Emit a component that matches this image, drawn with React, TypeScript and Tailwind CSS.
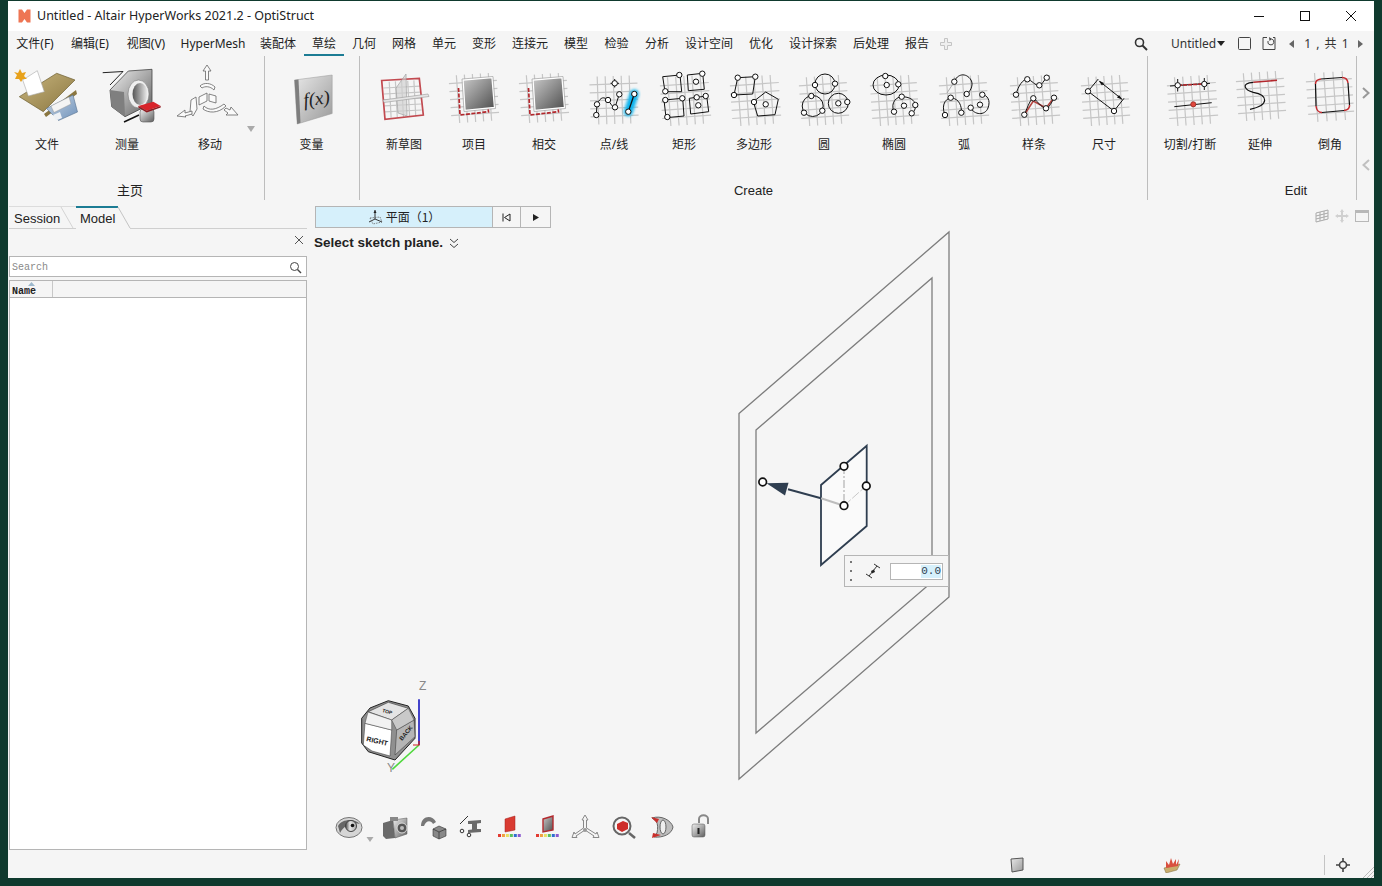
import React from "react";

const Grid = ({ x, y, w, h, a = -4, s = 8.4 }: { x: number; y: number; w: number; h: number; a?: number; s?: number }) => {
  const lines: React.ReactNode[] = [];
  const nx = Math.round(w / s);
  const ny = Math.round(h / s);
  for (let i = 1; i < nx; i++) {
    const lx = x + (i * w) / nx;
    lines.push(<line key={"v" + i} x1={lx} y1={y} x2={lx} y2={y + h} />);
  }
  for (let i = 1; i < ny; i++) {
    const ly = y + (i * h) / ny;
    lines.push(<line key={"h" + i} x1={x} y1={ly} x2={x + w} y2={ly} />);
  }
  return (
    <g stroke="#c6c6c6" strokeWidth="1.2" transform={`rotate(${a} ${x + w / 2} ${y + h / 2})`}>
      {lines}
    </g>
  );
};

const N = ({ x, y, r = 2.7 }: { x: number; y: number; r?: number }) => (
  <circle cx={x} cy={y} r={r} fill="#fff" stroke="#111" strokeWidth="1" />
);

const K = { fill: "none", stroke: "#111", strokeWidth: 1 } as const;

const IconBox = ({ left, children }: { left: number; children: React.ReactNode }) => (
  <svg width="70" height="64" viewBox={`${left} 66 70 64`} className="block overflow-visible">
    {children}
  </svg>
);

const ProjSquare = ({ dx }: { dx: number }) => (
  <g transform={`translate(${dx} 0)`}>
    <Grid x={520} y={74} w={48} h={48} />
    <path d="M528.5 88 L530 115 L558.5 111.7 L558 108" fill="none" stroke="#b3282d" strokeWidth="1.7" strokeDasharray="4 1.5" />
    <path d="M533 80 L562 77.5 L564.5 107.5 L535 110.5Z" fill="url(#sq)" stroke="#fff" strokeWidth="1.4" />
    <path d="M532 79 L563 76.5 L565.5 108.5 L534 111.5Z" fill="none" stroke="#aaa" strokeWidth="0.8" />
  </g>
);

const icons: Record<string, React.ReactNode> = {
  file: (
    <>
      <path d="M44 114 L76 90 L77 94 L46 117Z" fill="#8a7640" />
      <path d="M19.3 96.7 L56.7 73.3 L75 80 L43.3 111.7Z" fill="url(#tan)" stroke="#6f6034" strokeWidth="0.7" />
      <path d="M46.5 108.5 L73 95 L77.5 112 L58.5 120.5Z" fill="url(#fl)" stroke="#56718f" strokeWidth="0.6" />
      <path d="M51 106 L69 97 L71 104 L54 112.5Z" fill="#f4f4f4" stroke="#8b8b8b" strokeWidth="0.4" />
      <path d="M53 115 L60 112 L62 118 L56 120.5Z" fill="#eef1f5" />
      <path d="M22.7 80 L37.3 70.7 L44.3 91.7 L28.3 96Z" fill="#fff" stroke="#aaa" strokeWidth="0.6" />
      <path d="M20 69 L22 73 L26 72 L24 76 L27 79 L23 79 L21 82 L19 79 L15 79 L17 75 L14 72 L18 73Z" fill="#e8a21c" />
    </>
  ),
  measure: (
    <>
      <path d="M102.7 72.7 L123 71.5 L110 85" fill="none" stroke="#222" strokeWidth="1" />
      <path d="M110 90 L128.3 71 L152 69.3 L152 103.3 L125 116.7 L111.7 106.7Z" fill="url(#metal)" stroke="#444" strokeWidth="0.8" />
      <path d="M110 90 L124 92 L125 116.7 L111.7 106.7Z" fill="#7f7f7f" />
      <ellipse cx="138.5" cy="94" rx="10.5" ry="14" fill="#efefef" stroke="#777" strokeWidth="0.6" />
      <ellipse cx="140" cy="94" rx="7.5" ry="11" fill="url(#hole)" />
      <path d="M124 122 L139 115" stroke="#111" strokeWidth="1.5" />
      <rect x="140" y="109" width="14" height="13" rx="3" fill="url(#metal)" stroke="#555" strokeWidth="0.6" />
      <path d="M138.3 106 L153.3 101.7 L160.7 106 L146.7 110.7Z" fill="#d8232a" />
      <path d="M138.3 106 L146.7 110.7 L160.7 106 L160.7 107.5 L146.7 112.5 L138.3 107.5Z" fill="#8e1a1f" />
    </>
  ),
  move: (
    <g fill="#fafafa" stroke="#666" strokeWidth="0.8">
      <path d="M207 65 L211 71 L208.5 71 L208.5 80 L205.5 80 L205.5 71 L203 71Z" />
      <path d="M200 86 C204 82 211 83 215 87 L214 90 C210 86 205 86 202 88Z" />
      <path d="M199 97 L207 93 L207 101 L199 105Z" />
      <path d="M209 94 L216 96 L216 103 L209 101Z" />
      <path d="M191 100 L196 97 L197 109 L193 116 L190 112Z" />
      <path d="M177 116 L185 110 L185 113 L192 111 L192 114 L185 116 L186 117Z" />
      <path d="M204 106 C209 111 216 110 224 104 L226 106 C218 114 208 113 203 109Z" />
      <path d="M238 115 L226 115 L228 113 L224 110 L226 108 L230 110 L231 107Z" />
    </g>
  ),
  fx: (
    <>
      <path d="M294 80 L331.7 75 L331.7 113.5 L296.7 124Z" fill="url(#metal2)" stroke="#999" strokeWidth="0.5" />
      <path d="M294 80 L298 79.5 L300 122.8 L296.7 124Z" fill="#7e7e7e" />
      <text x="303" y="105" fontFamily="Liberation Serif, serif" fontStyle="italic" fontSize="19" fill="#222" transform="rotate(-8 315 100)">f(x)</text>
    </>
  ),
  newsk: (
    <>
      <Grid x={384} y={81} w={37} h={36} a={-3} s={6.2} />
      <path d="M381.7 80.5 L419.3 78.3 L423.3 115 L385 119.3Z" fill="none" stroke="#c24a50" strokeWidth="1.7" />
      <path d="M396 88 L406 74 L407 116 L398 113Z" fill="#cfcfcf" fillOpacity="0.65" stroke="#999" strokeWidth="0.6" />
      <path d="M383 100 L428 94 L429 96.5 L384 102.5Z" fill="#e5e5e5" stroke="#999" strokeWidth="0.6" />
    </>
  ),
  proj: <ProjSquare dx={-70} />,
  inter: <ProjSquare dx={0} />,
  pt: (
    <>
      <Grid x={590} y={76} w={48} h={48} a={-2} />
      <path d="M634.3 94 L628.3 111.7" stroke="#10b4ee" strokeWidth="9" strokeLinecap="round" filter="url(#glow)" />
      <path d="M596.3 115 L597 104.3 C601 96 604 97 608 100 C611 104 613 108 615 107.3 L619.3 94.3" {...K} />
      <path d="M634.3 94 L628.3 111.7" {...K} strokeWidth="1.3" />
      <path d="M614.7 79 V87.5 M610.5 83.3 H619" {...K} />
      <N x={596.3} y={115} /><N x={597} y={104.3} /><N x={608} y={100} /><N x={615} y={107.3} /><N x={619.3} y={94.3} /><N x={614.7} y={83.3} /><N x={634.3} y={94} /><N x={628.3} y={111.7} />
    </>
  ),
  rect: (
    <>
      <Grid x={661} y={76} w={49} h={49} />
      <path d="M662.7 76.7 L680 75 L681.7 91.7 L665 91.7Z M687.3 75 L702.7 73.3 L704.3 89.3 L688.3 90.7Z M664 100 L682.7 98.3 L684 116 L666 117.7Z M689.3 98.3 L706.7 96 L708.7 111.7 L690.7 114Z" {...K} />
      <N x={679.3} y={75} /><N x={665.3} y={91.3} /><N x={702.3} y={73.7} /><N x={696} y={81.7} /><N x={665.3} y={100} /><N x={682.3} y={98.3} /><N x={667.3} y={117} /><N x={696.7} y={97.3} /><N x={705.7} y={96} /><N x={698.3} y={105.3} />
    </>
  ),
  poly: (
    <>
      <Grid x={731} y={76} w={49} h={49} />
      <path d="M737.7 77.7 L755.3 76.7 L752.7 94 L734 95Z M765.7 92 L778.3 99.3 L775 114.7 L757.7 116 L753.3 101.7Z" {...K} />
      <N x={737.7} y={77.7} /><N x={755.3} y={76.7} /><N x={734} y={95} /><N x={754} y={102} /><N x={765.7} y={104.3} />
    </>
  ),
  circ: (
    <>
      <Grid x={800} y={76} w={48} h={49} />
      <circle cx="825" cy="84" r="10" {...K} /><circle cx="812.7" cy="106" r="10.5" {...K} /><circle cx="838.3" cy="103.3" r="10" {...K} />
      <N x={815} y={85} /><N x={835} y={83.7} /><N x={811.3} y={96} /><N x={804} y={112.7} /><N x={822.3} y={110.7} /><N x={838.3} y={103.3} /><N x={847.3} y={102} />
    </>
  ),
  ell: (
    <>
      <Grid x={871} y={76} w={47} h={49} />
      <ellipse cx="886" cy="85" rx="13" ry="10" {...K} />
      <path d="M894 111.7 C890 102 897 96.7 902 96.7 C909 96.7 915 100 915.3 105 C916 109 914 112 911.7 113.3" {...K} />
      <N x={885.3} y={76} /><N x={898.3} y={84.3} /><N x={886.7} y={85} /><N x={901.7} y={96.7} /><N x={894} y={111.7} /><N x={904} y={105.7} /><N x={911.7} y={113.3} /><N x={915.3} y={105} />
    </>
  ),
  arc: (
    <>
      <Grid x={940} y={76} w={48} h={49} />
      <path d="M947 93 L954.3 81.7" stroke="#aaa" strokeWidth="1" />
      <path d="M954.3 81.7 C957 74 966 72 971 80 C974 85 970 92 966.7 94" {...K} />
      <path d="M945 115 C940 103 948 97 952 98 C959 99 962 106 961.3 112.7" {...K} />
      <path d="M970.7 107.7 C974 115 985 116 988 108 C991 100 987 95 982.3 94.7" {...K} />
      <N x={954.3} y={81.7} /><N x={966.7} y={94} /><N x={945} y={115} /><N x={950.7} y={97.7} /><N x={961.3} y={112.7} /><N x={970.7} y={107.7} /><N x={982.3} y={94.7} /><N x={980} y={104.7} />
    </>
  ),
  spl: (
    <>
      <Grid x={1011} y={76} w={48} h={49} />
      <path d="M1024.3 114.7 L1033.3 101 L1046 108 L1054 97.7" fill="none" stroke="#b5433f" strokeWidth="1.6" />
      <path d="M1016 94.7 C1018 86 1023 79 1027.3 79.3 C1032 80 1035 86 1039.3 85.3 C1042 85 1044 80 1046.7 77.7" {...K} />
      <path d="M1024.3 114.7 C1028 106 1031 98 1033.3 98.3 C1036 99 1041 108 1046 108.3 C1049 108 1052 102 1054 97.7" {...K} />
      <N x={1016} y={94.7} /><N x={1027.3} y={79.3} /><N x={1039.3} y={85.3} /><N x={1046.7} y={77.7} /><N x={1024.3} y={114.7} /><N x={1033.3} y={98.3} /><N x={1046} y={108.3} /><N x={1054} y={97.7} />
    </>
  ),
  dim: (
    <>
      <Grid x={1082} y={76} w={47} h={49} />
      <path d="M1088 91.3 L1114 111 M1088 91.3 L1098.3 79 M1114 111 L1124 98.3" {...K} />
      <path d="M1100 81.7 L1121.7 99" {...K} />
      <path d="M1098.5 80.5 L1104 83 L1102 85.5Z M1122.5 99.8 L1117 97.5 L1119 95Z" fill="#111" />
      <N x={1088} y={91.3} /><N x={1114} y={111} />
    </>
  ),
  cut: (
    <>
      <Grid x={1168} y={76} w={49} h={49} />
      <path d="M1170 86 L1210 83.3" {...K} />
      <path d="M1178 85.3 L1204 84" stroke="#b3282d" strokeWidth="1.6" strokeDasharray="4 1" />
      <path d="M1177.7 79 V91.5 M1204.3 78 V90" {...K} />
      <path d="M1174.3 106.7 L1211.7 102.7" {...K} />
      <N x={1177.7} y={85.3} /><N x={1204.3} y={84} />
      <circle cx="1193.3" cy="104.3" r="2.6" fill="#e0483e" stroke="#8b1f1a" strokeWidth="0.7" />
    </>
  ),
  ext: (
    <>
      <Grid x={1237} y={72} w={48} h={48} />
      <path d="M1253.3 82.3 L1277 80.3" stroke="#b3282d" strokeWidth="1.6" fill="none" />
      <path d="M1253.3 82.3 C1240 83.3 1245 90 1253.3 92.3 C1268 95 1270 105 1250 109.3" {...K} strokeWidth="1.2" />
    </>
  ),
  fil: (
    <>
      <Grid x={1307} y={72} w={46} h={49} />
      <path d="M1315.5 84 L1316 106 M1322 112.5 L1344 110.5 M1349.5 105 L1348 83 M1342 77.5 L1321 79" {...K} strokeWidth="1.2" />
      <path d="M1321 79 C1317 79.5 1315.5 81 1315.5 84 M1316 106 C1316.5 110 1318 112.5 1322 112.5 M1344 110.5 C1348 110 1349.8 108 1349.5 105 M1348 83 C1347.6 79.5 1345.5 77.5 1342 77.5" fill="none" stroke="#c32b30" strokeWidth="1.5" />
    </>
  ),
};

type It = { t: string; l: number; i: string; w?: number };

const Item = ({ t, l, i, w = 70 }: It) => (
  <div className="flex flex-col items-center shrink-0" style={{ width: w }}>
    <IconBox left={l + w / 2 - 35}>{icons[i]}</IconBox>
    <div className="mt-[7px] h-[16px] whitespace-nowrap text-[12px] leading-[16px] text-[#222]">{t}</div>
  </div>
);

const Sep = () => <div className="h-full w-px shrink-0 bg-[#bdbdbd]" />;

const menu: [string, number][] = [
  ["文件(F)", 54], ["编辑(E)", 56], ["视图(V)", 56], ["HyperMesh", 78], ["装配体", 52], ["草绘", 40], ["几何", 40], ["网格", 40], ["单元", 40], ["变形", 40], ["连接元", 52], ["模型", 40], ["检验", 41], ["分析", 40], ["设计空间", 64], ["优化", 40], ["设计探索", 64], ["后处理", 52], ["报告", 40],
];

const TB = ({ cx, w = 38, children }: { cx: number; w?: number; children: React.ReactNode }) => (
  <svg width={w} height="38" viewBox={`${cx - w / 2} 808 ${w} 38`} className="block shrink-0">{children}</svg>
);

const Rainbow = ({ x }: { x: number }) => (
  <g>
    {["#e23b32", "#f0a040", "#e8e060", "#58c060", "#2f6fd0", "#8a5ad0"].map((c, i) => (
      <rect key={c} x={x + i * 3.95} y={834} width="3" height="3" fill={c} />
    ))}
  </g>
);

export default function App() {
  return (
    <div className="relative h-[886px] w-[1382px] overflow-hidden bg-[#0f3a2e] pl-[8px] pt-[1px] font-['Noto_Sans','Noto_Sans_CJK_SC',sans-serif] text-[#222]">
      <svg className="absolute h-0 w-0">
        <defs>
          <linearGradient id="sq" x1="0" y1="0" x2="1" y2="1"><stop offset="0" stopColor="#c9c9c9" /><stop offset="1" stopColor="#4d4d4d" /></linearGradient>
          <linearGradient id="tan" x1="0" y1="0" x2="1" y2="1"><stop offset="0" stopColor="#c8b57e" /><stop offset="1" stopColor="#8a7640" /></linearGradient>
          <linearGradient id="fl" x1="0" y1="0" x2="1" y2="1"><stop offset="0" stopColor="#c9d6e4" /><stop offset="1" stopColor="#6f92bb" /></linearGradient>
          <linearGradient id="metal" x1="0" y1="0" x2="1" y2="1"><stop offset="0" stopColor="#f0f0f0" /><stop offset="0.5" stopColor="#a8a8a8" /><stop offset="1" stopColor="#5e5e5e" /></linearGradient>
          <linearGradient id="metal2" x1="0" y1="0" x2="1" y2="1"><stop offset="0" stopColor="#e8e8e8" /><stop offset="1" stopColor="#9a9a9a" /></linearGradient>
          <linearGradient id="hole" x1="0" y1="0" x2="1" y2="0"><stop offset="0" stopColor="#555" /><stop offset="1" stopColor="#eee" /></linearGradient>
          <linearGradient id="bk" x1="0" y1="0" x2="1" y2="0"><stop offset="0" stopColor="#444" /><stop offset="0.4" stopColor="#e5e5e5" /><stop offset="1" stopColor="#aaa" /></linearGradient>
          <filter id="glow" x="-100%" y="-100%" width="300%" height="300%"><feGaussianBlur stdDeviation="1.6" /></filter>
        </defs>
      </svg>

      <div className="flex h-[877px] w-[1366px] flex-col bg-[#f5f5f5]">
        {/* Title bar */}
        <div className="flex h-[30px] shrink-0 items-center bg-white pl-[10px]">
          <svg width="13" height="14" viewBox="0 0 13 14" className="shrink-0">
            <path d="M0.5 0.5 H4 L6.5 4 L9 0.5 H12.5 V13.5 H9 L6.5 10 L4 13.5 H0.5Z" fill="#ee7553" />
          </svg>
          <div className="ml-[6px] whitespace-nowrap text-[12.5px] text-[#222]">Untitled - Altair HyperWorks 2021.2 - OptiStruct</div>
          <div className="ml-auto flex h-full">
            {[
              <path key="a" d="M7 10.5 H17" stroke="#111" strokeWidth="1" />,
              <rect key="b" x="7.5" y="5.5" width="9" height="9" fill="none" stroke="#111" strokeWidth="1" />,
              <path key="c" d="M7 5 L17 15 M17 5 L7 15" stroke="#111" strokeWidth="1" />,
            ].map((p, i) => (
              <div key={i} className="flex h-full w-[46px] items-center justify-center">
                <svg width="24" height="20" viewBox="0 0 24 20">{p}</svg>
              </div>
            ))}
          </div>
        </div>

        {/* Menu bar */}
        <div className="flex h-[25px] shrink-0 items-center">
          {menu.map(([t, w]) => (
            <div
              key={t}
              style={{ width: w }}
              className={
                t === "草绘"
                  ? "flex h-[25px] shrink-0 items-center justify-center whitespace-nowrap border-b-2 border-[#1c7c94] pt-[2px] text-[12px]"
                  : "flex h-[25px] shrink-0 items-center justify-center whitespace-nowrap pt-[1px] text-[12px]"
              }
            >
              {t}
            </div>
          ))}
          <svg width="12" height="12" viewBox="0 0 12 12" className="ml-[3px] shrink-0">
            <path d="M4.5 0.5 H7.5 V4.5 H11.5 V7.5 H7.5 V11.5 H4.5 V7.5 H0.5 V4.5 H4.5Z" fill="#efefef" stroke="#c4c4c4" />
          </svg>
          <svg width="14" height="14" viewBox="0 0 14 14" className="ml-[182px] shrink-0">
            <circle cx="5.5" cy="5.5" r="4" fill="none" stroke="#333" strokeWidth="1.6" />
            <path d="M8.5 8.5 L13 13" stroke="#333" strokeWidth="2" />
          </svg>
          <div className="ml-[23px] whitespace-nowrap text-[12px] text-[#333]">Untitled</div>
          <svg width="8" height="5" viewBox="0 0 8 5" className="ml-[1px] shrink-0"><path d="M0 0 H8 L4 5Z" fill="#222" /></svg>
          <svg width="14" height="14" viewBox="0 0 14 14" className="ml-[13px] shrink-0"><rect x="0.5" y="0.5" width="12" height="12" rx="1" fill="none" stroke="#444" /></svg>
          <svg width="15" height="15" viewBox="0 0 15 15" className="ml-[10px] shrink-0">
            <path d="M5 1.5 H1 V13.5 H13 V1.5 H11" fill="none" stroke="#444" />
            <path d="M9.5 3 A3 3 0 1 1 6 5" fill="none" stroke="#444" />
            <path d="M7 1 L10 3 L7.5 5Z" fill="#444" />
          </svg>
          <svg width="5" height="8" viewBox="0 0 5 8" className="ml-[12px] shrink-0"><path d="M5 0 V8 L0 4Z" fill="#666" /></svg>
          <div className="ml-[10px] w-[44px] whitespace-nowrap text-[12px] tracking-[1px] text-[#333]">1 , 共 1</div>
          <svg width="5" height="8" viewBox="0 0 5 8" className="ml-[10px] shrink-0"><path d="M0 0 V8 L5 4Z" fill="#666" /></svg>
        </div>

        {/* Ribbon */}
        <div className="flex h-[144px] shrink-0">
          <div className="relative flex w-[256px] shrink-0 flex-col">
            <div className="flex h-[125px] shrink-0 pt-[10px]">
              <Item t="文件" l={8} i="file" w={78} />
              <Item t="测量" l={86} i="measure" w={82} />
              <Item t="移动" l={168} i="move" w={84} />
            </div>
            <svg width="8" height="6" viewBox="0 0 8 6" className="absolute left-[239px] top-[70px]"><path d="M0 0 H8 L4 6Z" fill="#aaa" /></svg>
            <div className="pr-[12px] text-center text-[13px] leading-[18px]">主页</div>
          </div>
          <Sep />
          <div className="flex w-[94px] shrink-0 flex-col">
            <div className="flex h-[125px] shrink-0 pt-[10px]"><Item t="变量" l={265} i="fx" w={93} /></div>
          </div>
          <Sep />
          <div className="flex w-[787px] shrink-0 flex-col">
            <div className="flex h-[125px] shrink-0 pl-[9px] pt-[10px]">
              <Item t="新草图" l={369} i="newsk" />
              <Item t="项目" l={439} i="proj" />
              <Item t="相交" l={509} i="inter" />
              <Item t="点/线" l={579} i="pt" />
              <Item t="矩形" l={649} i="rect" />
              <Item t="多边形" l={719} i="poly" />
              <Item t="圆" l={789} i="circ" />
              <Item t="椭圆" l={859} i="ell" />
              <Item t="弧" l={929} i="arc" />
              <Item t="样条" l={999} i="spl" />
              <Item t="尺寸" l={1069} i="dim" />
            </div>
            <div className="mt-[1px] text-center font-['Liberation_Sans'] text-[13px] leading-[18px]">Create</div>
          </div>
          <Sep />
          <div className="flex w-[208px] shrink-0 flex-col overflow-hidden">
            <div className="flex h-[125px] shrink-0 pl-[7px] pt-[10px]">
              <Item t="切割/打断" l={1155} i="cut" />
              <Item t="延伸" l={1225} i="ext" />
              <Item t="倒角" l={1295} i="fil" />
            </div>
            <div className="mt-[1px] pl-[88px] text-center font-['Liberation_Sans'] text-[13px] leading-[18px]">Edit</div>
          </div>
          <Sep />
          <div className="flex flex-1 flex-col items-center pt-[31px]">
            <svg width="8" height="12" viewBox="0 0 8 12"><path d="M1 1 L6.5 6 L1 11" fill="none" stroke="#999" strokeWidth="2" /></svg>
            <svg width="8" height="12" viewBox="0 0 8 12" className="mt-[60px]"><path d="M7 1 L1.5 6 L7 11" fill="none" stroke="#c0c0c0" strokeWidth="2" /></svg>
          </div>
        </div>

        {/* Body */}
        <div className="flex min-h-0 flex-1">
          {/* Left panel */}
          <div className="flex h-[650px] w-[299px] shrink-0 flex-col pl-[1px]">
            <div className="relative flex h-[29px] shrink-0 items-end border-b border-[#cfcfcf] font-['Liberation_Sans'] text-[13px]">
              <div className="flex h-[22px] w-[67px] items-center border-t border-[#dcdcdc] pl-[5px] pt-[3px]">Session</div>
              <div className="z-10 mb-[-1px] flex h-[23px] w-[54px] items-center bg-[#f5f5f5] pl-[4px] pt-[2px]">
                <span className="absolute left-[67px] top-[6px] h-[2px] w-[42px] bg-[#1c7c94]" />
                Model
              </div>
              <svg width="80" height="23" viewBox="0 0 80 23" className="absolute left-[47px] top-[6px] z-20">
                <path d="M5 1 L17 22" stroke="#d4d4d4" fill="none" />
                <path d="M62 1 L74 22" stroke="#c4c4c4" fill="none" />
              </svg>
            </div>
            <div className="flex h-[27px] shrink-0 items-start justify-end pt-[6px]">
              <svg width="10" height="10" viewBox="0 0 10 10" className="mr-[3px]"><path d="M1 1 L9 9 M9 1 L1 9" stroke="#555" strokeWidth="1" /></svg>
            </div>
            <div className="flex h-[21px] shrink-0 items-center border border-[#b5b5b5] bg-white pl-[2px] pr-[4px] pt-[1px] font-['Liberation_Mono'] text-[10px] text-[#888]">
              Search
              <svg width="13" height="13" viewBox="0 0 13 13" className="ml-auto">
                <circle cx="5.5" cy="5.5" r="4" fill="none" stroke="#444" />
                <path d="M8.5 8.5 L12 12" stroke="#444" strokeWidth="1.4" />
              </svg>
            </div>
            <div className="mt-[3px] flex h-[17px] shrink-0 border border-b-0 border-[#b5b5b5] bg-[#f5f5f5] font-['Liberation_Mono'] text-[10px] font-bold">
              <div className="relative w-[43px] border-r border-[#c8c8c8] pl-[2px] pt-[4px] leading-[13px]">
                Name
                <svg width="7" height="4" viewBox="0 0 7 4" className="absolute left-[18px] top-[1px]"><path d="M0 4 L3.5 0 L7 4Z" fill="#9db8cc" /></svg>
              </div>
            </div>
            <div className="flex-1 border border-[#b5b5b5] bg-white" />
          </div>

          {/* Viewport */}
          <div className="relative flex min-w-0 flex-1 flex-col">
            <svg viewBox="307 200 1067 652" className="absolute left-0 top-0 h-[652px] w-[1067px]">
              <g fill="none" stroke="#7d7d7d" strokeWidth="1.3">
                <path d="M739 413.5 L949 232 V597 L739 779Z" />
                <path d="M756 430 L932 278 V582 L756 733Z" />
              </g>
              <path d="M821 485 L866.7 445.7 V526 L821 565Z" fill="#fafafa" stroke="#2f3e50" strokeWidth="1.8" />
              <path d="M844 466 V505.7" stroke="#bbb" strokeWidth="1.4" strokeDasharray="8 2 2 2" />
              <path d="M844 505.7 L866 486" stroke="#bbb" strokeWidth="0.8" strokeDasharray="9 2" />
              <path d="M821 498.3 L844 505.7" stroke="#bdbdbd" strokeWidth="2" />
              <path d="M788 489.3 L821 498.3" stroke="#2f3e50" strokeWidth="2" />
              <path d="M766.5 483.3 L788.5 482.7 L785 495.5Z" fill="#2f3e50" />
              <g fill="#fff" stroke="#111" strokeWidth="1.7">
                <circle cx="844" cy="466.3" r="3.8" />
                <circle cx="866.3" cy="486" r="3.8" />
                <circle cx="844" cy="505.7" r="3.8" />
                <circle cx="762.7" cy="482" r="3.8" />
              </g>

              {/* nav cube */}
              <path d="M419 699.3 V745" stroke="#1616c0" strokeWidth="1.6" />
              <path d="M419 745 L392.3 769.3" stroke="#4fd83c" strokeWidth="1.6" />
              <path d="M413 745 H419 V741" fill="none" stroke="#d02020" strokeWidth="1.2" />
              <text x="419" y="690" fontFamily="Liberation Sans, sans-serif" fontSize="12" fill="#888">Z</text>
              <text x="387" y="772" fontFamily="Liberation Sans, sans-serif" fontSize="12" fill="#888">Y</text>
              <path d="M388.3 700.7 L408.3 706 L415 718.3 L415 738.3 L395 760 L368.3 751.7 L361.7 743 L361.7 718.3 L370 708Z" fill="#8f8f8f" stroke="#222" strokeWidth="1" />
              <path d="M368.3 711.7 L388.3 702.3 L408.3 708.3 L391.7 720Z" fill="#e4e4e4" stroke="#333" strokeWidth="0.6" />
              <path d="M365 723.3 L391.7 730 L390 756 L372 751 L363.3 745Z" fill="#fff" stroke="#333" strokeWidth="0.5" />
              <path d="M368 712 L391.7 720 L391.7 730 L365 723.3Z" fill="#f2f2f2" stroke="#444" strokeWidth="0.5" />
              <path d="M396.7 730 L414 720 L415 736.7 L395 755Z" fill="#b5b5b5" stroke="#333" strokeWidth="0.5" />
              <path d="M391.7 720 L408.3 708.3 L414 720 L396.7 730Z" fill="#c9c9c9" stroke="#444" strokeWidth="0.5" />
              <text x="366" y="741" fontFamily="Liberation Sans, sans-serif" fontWeight="bold" fontSize="7" fill="#222" transform="rotate(13 366 741)">RIGHT</text>
              <text x="402" y="741" fontFamily="Liberation Sans, sans-serif" fontWeight="bold" fontSize="6" fill="#222" transform="rotate(-50 402 741)">BACK</text>
              <text x="382" y="712" fontFamily="Liberation Sans, sans-serif" fontWeight="bold" fontSize="5" fill="#222" transform="rotate(15 382 712)">TOP</text>
            </svg>

            {/* Step bar */}
            <div className="relative flex h-[32px] shrink-0 items-start pl-[8px] pt-[6px]">
              <div className="flex h-[22px] w-[178px] items-center justify-center border border-[#b5b5b5] bg-[#d6f0fb] text-[12px]">
                <svg width="16" height="16" viewBox="0 0 16 16" className="mr-[2px] shrink-0">
                  <path d="M7 1 V10 M7 10 L1 13 M7 10 L14 13" stroke="#333" strokeWidth="1" />
                  <path d="M5.5 4 L7 1 L8.5 4Z" fill="#222" />
                  <path d="M2 9 L12 8 L14 13 L5 15Z" fill="none" stroke="#666" strokeWidth="0.8" strokeDasharray="1.5 1" />
                </svg>
                <span className="font-['Noto_Sans_CJK_SC']">平面（1）</span>
              </div>
              <div className="flex h-[22px] w-[28px] items-center justify-center border border-l-0 border-[#b5b5b5]">
                <svg width="9" height="9" viewBox="0 0 9 9"><path d="M1 0.5 V8.5" stroke="#222" /><path d="M8 1 V8 L2.5 4.5Z" fill="none" stroke="#222" /></svg>
              </div>
              <div className="flex h-[22px] w-[30px] items-center justify-center border border-l-0 border-[#b5b5b5]">
                <svg width="8" height="9" viewBox="0 0 8 9"><path d="M1 1 V8 L7 4.5Z" fill="#222" /></svg>
              </div>
              <div className="ml-auto mr-[5px] mt-[3px] flex items-center gap-[6px]">
                <svg width="14" height="14" viewBox="0 0 14 14"><path d="M1 4 L13 1 V10 L1 13Z M5 3 V12 M9 2 V11 M1 7 L13 4 M1 10 L13 7" fill="none" stroke="#aaa" /></svg>
                <svg width="14" height="14" viewBox="0 0 14 14"><path d="M7 0 L9 3 H8 V6 H11 V5 L14 7 L11 9 V8 H8 V11 H9 L7 14 L5 11 H6 V8 H3 V9 L0 7 L3 5 V6 H6 V3 H5Z" fill="#d0d0d0" /></svg>
                <svg width="14" height="12" viewBox="0 0 14 12"><rect x="0.5" y="0.5" width="13" height="11" fill="none" stroke="#b8b8b8" /><rect x="0.5" y="0.5" width="13" height="2.5" fill="#b8b8b8" /></svg>
              </div>
            </div>
            <div className="relative flex h-[20px] shrink-0 items-center pl-[7px] pt-[2px] font-['Liberation_Sans'] text-[13.5px] font-bold text-[#222]">
              Select sketch plane.
              <svg width="10" height="11" viewBox="0 0 10 11" className="ml-[6px]"><path d="M1 1 L5 4.5 L9 1 M1 6 L5 9.5 L9 6" fill="none" stroke="#444" /></svg>
            </div>

            {/* canvas space with floating dimension box */}
            <div className="relative flex-1">
              <div className="absolute left-[537px] top-[303px] flex h-[32px] w-[105px] items-center border border-[#b5b5b5] bg-[#f5f5f5]">
                <div className="ml-[5px] flex h-[20px] w-px flex-col justify-between">
                  <span className="block h-[2px] w-[2px] bg-[#777]" />
                  <span className="block h-[2px] w-[2px] bg-[#777]" />
                  <span className="block h-[2px] w-[2px] bg-[#777]" />
                </div>
                <svg width="16" height="16" viewBox="0 0 16 16" className="ml-[14px]">
                  <path d="M1 11 L7 15 M9 1 L15 5 M4 13 L12 3" stroke="#333" fill="none" />
                  <path d="M6 8 L9 6.5 L10 9 L7 10.5Z" fill="#222" />
                </svg>
                <div className="ml-[9px] flex h-[17px] w-[53px] items-center justify-end border border-[#b5b5b5] bg-white pr-[1px] font-['Liberation_Mono'] text-[11px] leading-[13px] text-[#2f3e50]">
                  <span className="bg-[#d6f0fb]">0.0</span>
                </div>
              </div>
            </div>

            {/* Bottom toolbar */}
            <div className="flex h-[38px] shrink-0 pl-[23px]">
              <TB cx={353} w={46}>
                <ellipse cx="349" cy="827.5" rx="13" ry="10" fill="#d5d5d5" stroke="#777" strokeWidth="1" />
                <path d="M338 826 C342 819 354 818 360 824 C355 822 345 823 340 833Z" fill="#666" />
                <circle cx="351" cy="826" r="5.5" fill="url(#bk)" stroke="#444" />
                <circle cx="352.5" cy="825.5" r="1.8" fill="#111" />
                <path d="M366.5 837 H373.5 L370 842Z" fill="#aaa" />
              </TB>
              <TB cx={395}>
                <path d="M383 823 L393 820 L395 838 L386 839 L383 836Z" fill="#6a6a6a" />
                <path d="M393 820 L407 818 L407 834 L395 838Z" fill="url(#metal)" stroke="#555" strokeWidth="0.5" />
                <circle cx="402" cy="828" r="5" fill="#555" stroke="#ddd" />
                <circle cx="402" cy="828" r="2" fill="#bbb" />
                <rect x="390" y="817" width="8" height="4" fill="#888" />
              </TB>
              <TB cx={433}>
                <path d="M421 826 C421 816 432 814 436 822 L433 824 C431 820 426 820 424 826Z" fill="#777" />
                <path d="M433 829 L439 826 L446 829 L446 836 L439 839 L433 836Z" fill="#888" stroke="#333" strokeWidth="0.6" />
                <path d="M439 832 V839 M433 829 L439 832 L446 829" stroke="#222" strokeWidth="0.6" fill="none" />
              </TB>
              <TB cx={471}>
                <path d="M460 824 L468 816" stroke="#333" />
                <circle cx="462" cy="831" r="1.8" fill="none" stroke="#333" />
                <circle cx="469" cy="835" r="1.8" fill="none" stroke="#333" />
                <path d="M468 821 L481 820 V823 L477 823.5 V829 L481 829 V832 L468 833 V830 L472 829.5 V824 L468 824Z" fill="#6a6a6a" />
              </TB>
              <TB cx={508}>
                <path d="M504 819 L514 816 V830 L504 832Z" fill="#d93b32" stroke="#a3211c" strokeWidth="0.5" />
                <Rainbow x={497} />
              </TB>
              <TB cx={546}>
                <path d="M542 819 L552 816 V830 L542 832Z" fill="url(#sq)" stroke="#b3282d" strokeWidth="1.4" />
                <Rainbow x={535} />
              </TB>
              <TB cx={584}>
                <g fill="#f5f5f5" stroke="#888" strokeWidth="1">
                  <path d="M584 815 L587 820 H585.5 V828 L595 834 L596 832 L598 837.5 L592 837.5 L593 836 L584 830 L575 836 L576 837.5 L571 837.5 L573 832 L574 834 L582.5 828 V820 H581Z" />
                </g>
                <circle cx="584" cy="830" r="2" fill="#999" />
              </TB>
              <TB cx={622}>
                <circle cx="621" cy="826" r="8.5" fill="#f5f5f5" stroke="#666" strokeWidth="2" />
                <path d="M628 833 L634 838" stroke="#666" strokeWidth="2.5" />
                <path d="M616 824 L622 821 L627 823 L627 829 L621 832 L616 829Z" fill="#cd2d2a" />
              </TB>
              <TB cx={660}>
                <path d="M651 818 C660 815 670 820 672 827 C671 834 662 838 653 837 L656 833 C657 828 657 824 655 821Z" fill="#bdbdbd" stroke="#666" />
                <path d="M650 817 L658 819 L656 823Z M652 833 L660 835 L651 838Z" fill="#c9302c" />
                <ellipse cx="662" cy="827" rx="3" ry="7" fill="#eee" stroke="#666" />
              </TB>
              <TB cx={699}>
                <rect x="692" y="824" width="13" height="13" rx="2" fill="url(#metal)" stroke="#555" strokeWidth="0.5" />
                <path d="M699 823 V819 C699 814 708 814 708 819 V824" fill="none" stroke="#888" strokeWidth="2" />
                <rect x="697.5" y="828" width="2" height="6" fill="#222" />
              </TB>
            </div>
            <div className="h-[6px] shrink-0" />
          </div>
        </div>

        {/* Status bar */}
        <div className="relative flex h-[26px] shrink-0 items-center">
          <svg width="14" height="16" viewBox="0 0 14 16" className="ml-[1002px] shrink-0">
            <path d="M1 2 L13 1 V13 L2 15Z" fill="url(#metal2)" stroke="#555" />
          </svg>
          <svg width="18" height="16" viewBox="0 0 18 16" className="ml-[139px] shrink-0">
            <path d="M1 11 L17 7 L14 13 L3 16Z" fill="#c9ad6c" stroke="#7d6a3a" strokeWidth="0.5" />
            <path d="M3 11 L3 4 L6 8 L8 1 L10 7 L13 2 L13 8 L16 2 L15 9Z" fill="#d9503f" />
          </svg>
          <div className="ml-[143px] h-[20px] w-px shrink-0 bg-[#c4c4c4]" />
          <svg width="14" height="14" viewBox="0 0 14 14" className="ml-[11px] shrink-0">
            <circle cx="7" cy="7" r="3.5" fill="none" stroke="#444" strokeWidth="1.6" />
            <path d="M7 0 V4 M7 10 V14 M0 7 H4 M10 7 H14" stroke="#444" strokeWidth="1.6" />
          </svg>
          <svg width="12" height="12" viewBox="0 0 12 12" className="absolute bottom-0 right-0">
            <path d="M12 1 L1 12 M12 5 L5 12 M12 9 L9 12" stroke="#bbb" />
          </svg>
        </div>
      </div>
    </div>
  );
}
